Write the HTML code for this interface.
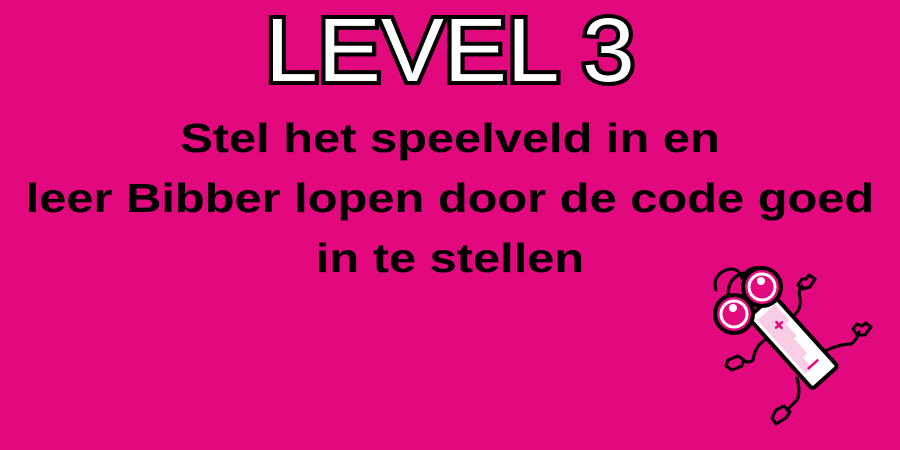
<!DOCTYPE html>
<html><head><style>
html,body{margin:0;padding:0}
body{width:900px;height:450px;background:#E2097F;position:relative;overflow:hidden;font-family:"Liberation Sans",sans-serif}
.t{position:absolute;left:0;width:900px;text-align:center;top:0px;font-size:90px;color:#fff;-webkit-text-stroke:8px #000;paint-order:stroke fill;transform:scaleX(1.05)}
.s{position:absolute;left:0;width:900px;text-align:center;top:108px;font-size:41px;font-weight:bold;line-height:60px;color:#000;transform:scaleX(1.19);transform-origin:450px 0}
svg{position:absolute;left:0;top:0}
</style></head><body>
<div class="t">LEVEL 3</div>
<div class="s">Stel het speelveld in en<br>leer Bibber lopen door de code goed<br>in te stellen</div>
<svg width="900" height="450" viewBox="0 0 900 450" fill="none" stroke="#000" stroke-width="3" stroke-linecap="round" stroke-linejoin="round">
<path d="M716 290 q-4 -14 10 -20 q12 -4 16 8"/>
<path d="M728 295 q0 -18 16 -22 q14 -2 14 6"/>
<path d="M742 278 q6 -12 18 -10"/>
<path d="M790 318 q12 -6 10 -20 q-2 -8 2 -12"/>
<path d="M798 285 l4 -6 l4 0 l3 -4 l6 4 l-5 8 l-8 2 z"/>
<path d="M823 352 q16 -8 28 -8 q6 -4 8 -12"/>
<path d="M857 335 l-4 -6 l4 -5 l5 2 l4 -3 l5 4 l-6 8 z"/>
<path d="M765 340 q-10 6 -12 20 q-4 4 -10 0"/>
<path d="M744 360 l-6 -4 l-10 4 l-2 6 l6 4 l10 -4 z"/>
<path d="M797 378 q4 14 0 22 q-6 6 -10 10"/>
<path d="M790 412 l-6 -6 l-8 4 l-4 8 l4 6 l10 -6 z"/>
<g transform="translate(793,342) rotate(48)">
<rect x="-48" y="-17" width="96" height="34" rx="3" fill="#fff" stroke="#000" stroke-width="4"/>
<path d="M-40 -12 h22 v5 h16 v4 h20 v6 h14 v9 h-72 z" fill="#E2097F" stroke="none" opacity="0.2"/>
<path d="M-22 -5 v8 M-26 -1 h8" stroke="#E2097F" stroke-width="2.5"/>
<path d="M30 -6 v12" stroke="#E2097F" stroke-width="2.5"/>
</g>
<circle cx="762" cy="287" r="19" fill="#E2097F" stroke="#000" stroke-width="4"/>
<circle cx="762" cy="287" r="13" stroke="#fff" stroke-width="3"/>
<circle cx="761" cy="281" r="4" fill="#fff" stroke="none"/>
<circle cx="734" cy="314" r="19" fill="#E2097F" stroke="#000" stroke-width="4"/>
<circle cx="734" cy="314" r="13" stroke="#fff" stroke-width="3"/>
<circle cx="733" cy="308" r="4" fill="#fff" stroke="none"/>
</svg>
</body></html>
